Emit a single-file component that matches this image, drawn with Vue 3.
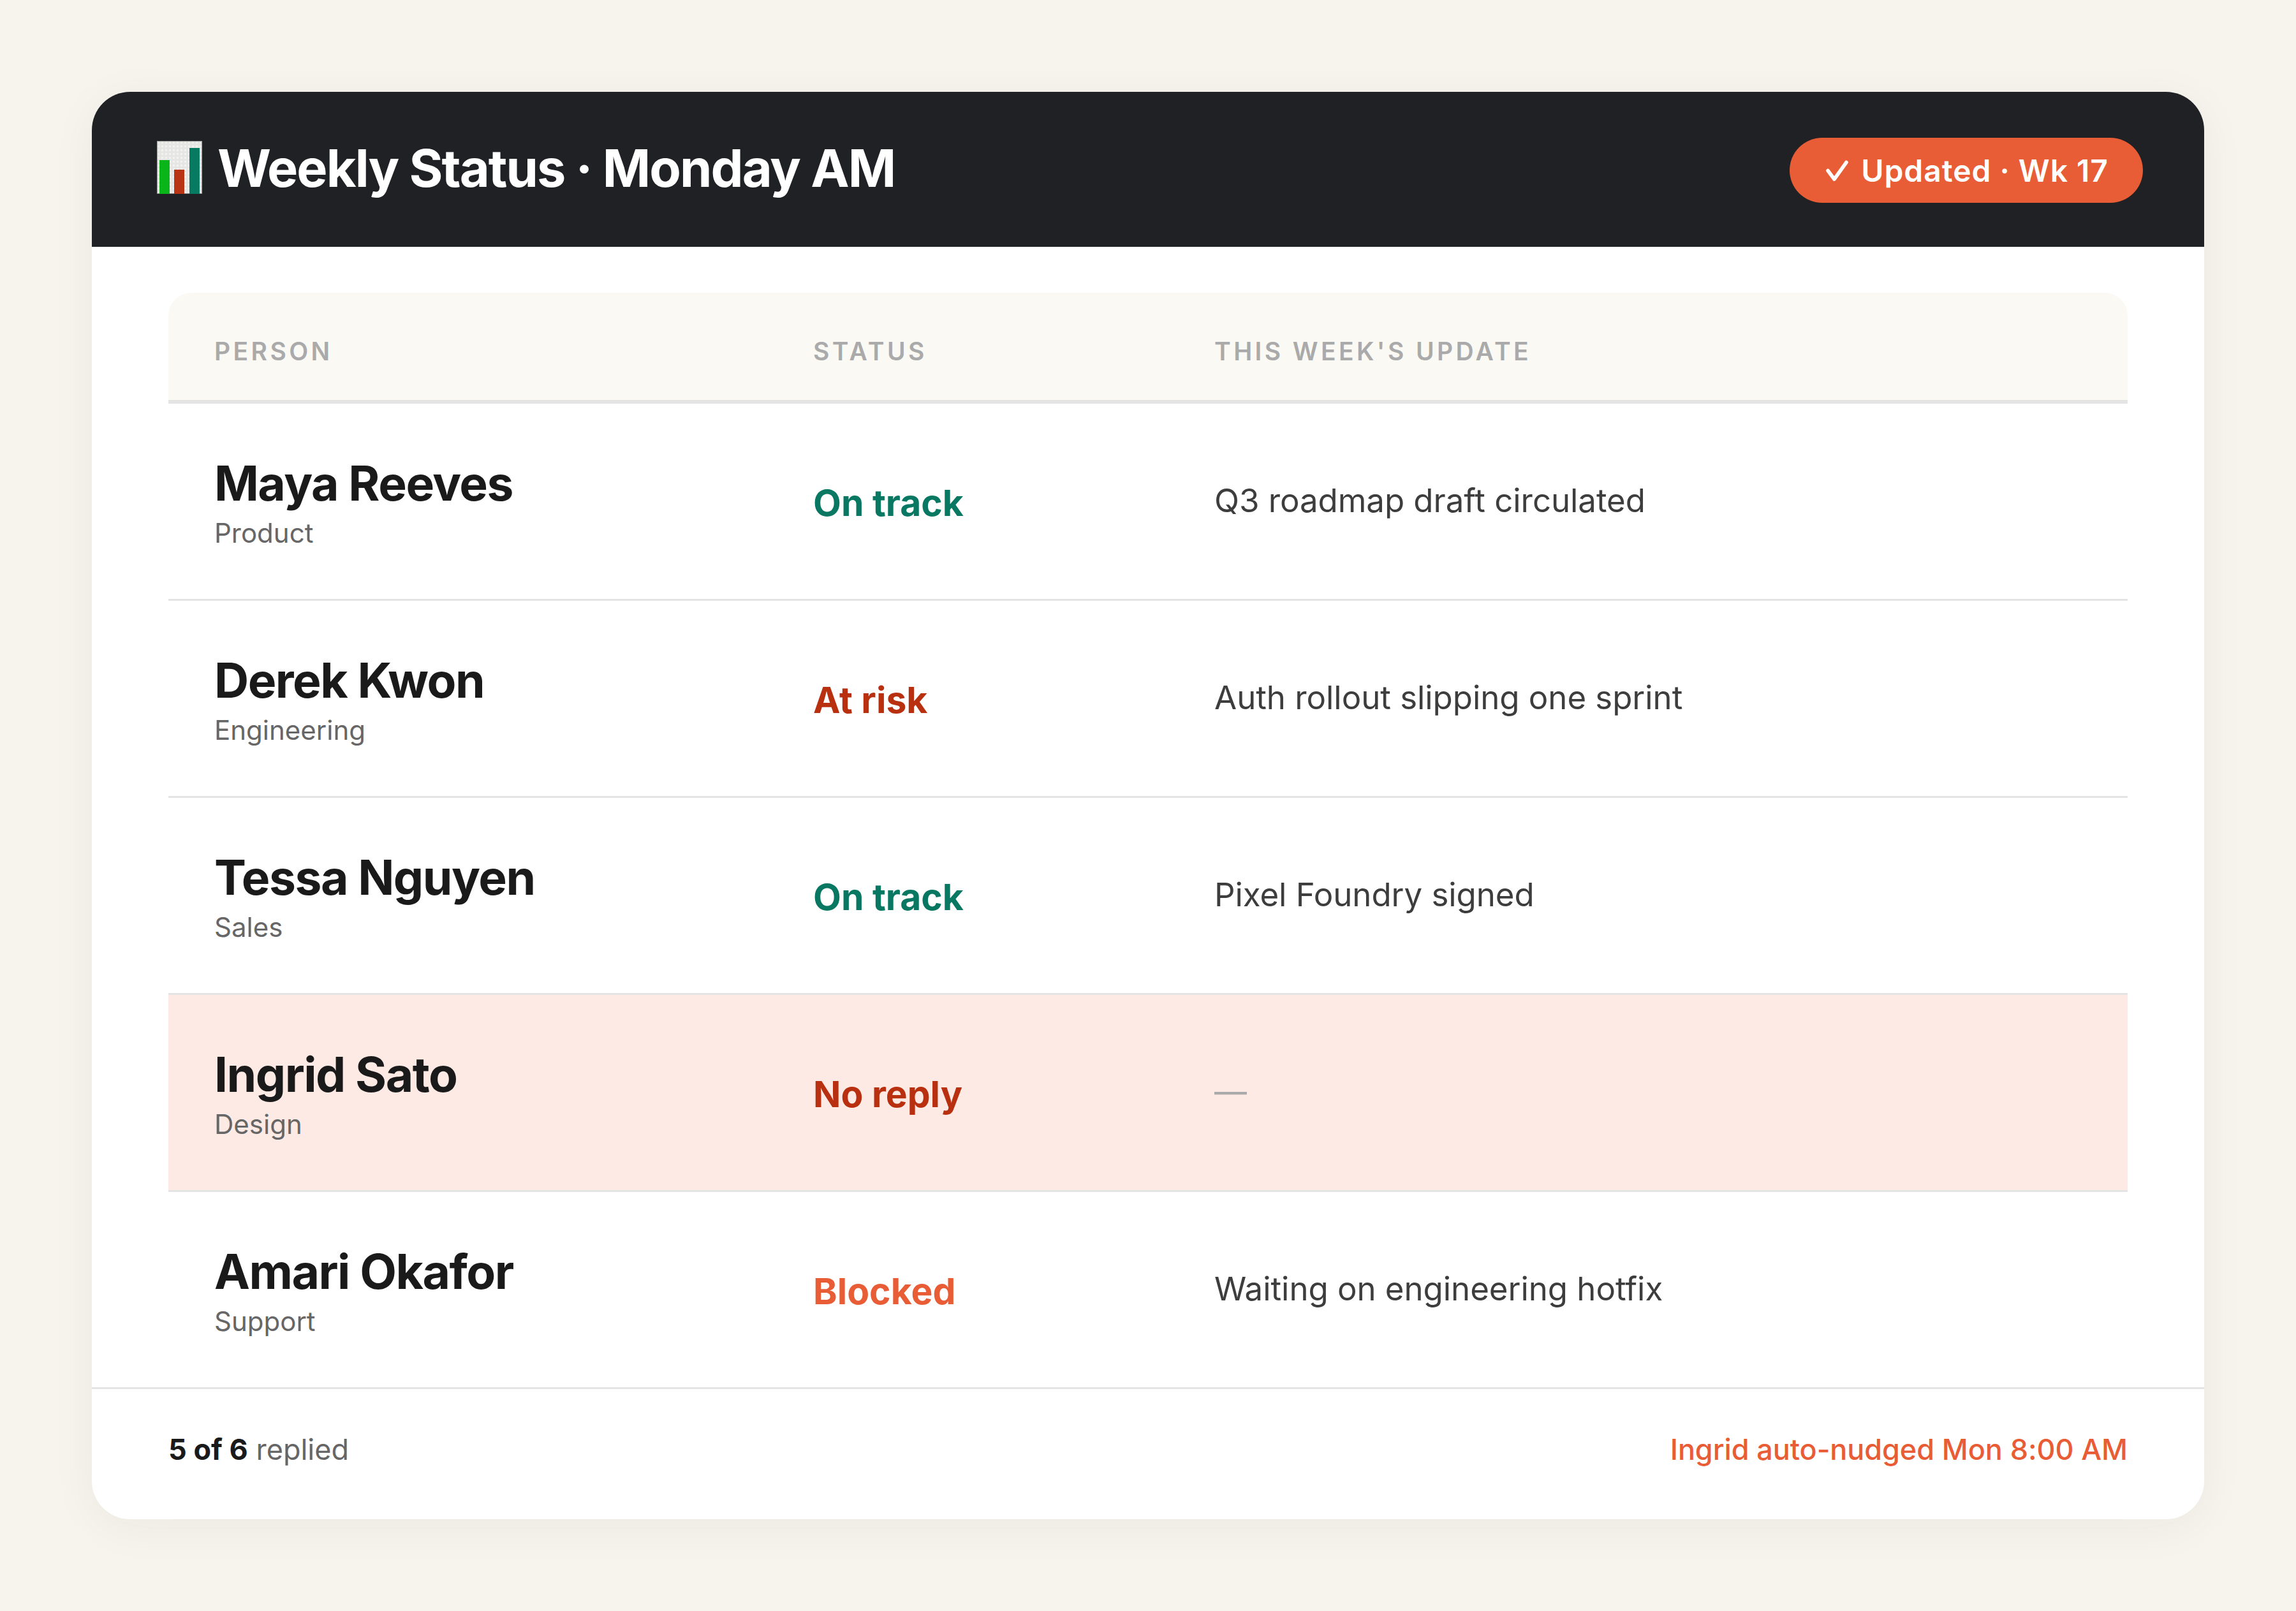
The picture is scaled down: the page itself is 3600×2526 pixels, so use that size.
<template>
  <div class="page">
    <section class="card">
      <header class="top">
        <h1 class="title">
          <svg class="chart" viewBox="0 0 71 83" width="71" height="83" aria-hidden="true">
            <defs>
              <pattern id="weave" width="6" height="6" patternUnits="userSpaceOnUse">
                <rect width="6" height="6" fill="#e6e6e4" />
                <rect x="1" y="1" width="3" height="3" fill="#f2f2f0" />
              </pattern>
            </defs>
            <rect width="71" height="83" fill="url(#weave)" />
            <path d="M.5 83V.5H70.500V83" fill="none" stroke="#a9a9a9" stroke-width="1.500" />
            <rect x="0" y="82" width="71" height="1" fill="#8c8c8c" />
            <rect x="4" y="30" width="16" height="53" fill="#0ab51a" />
            <rect x="27" y="45" width="16" height="38" fill="#b93414" />
            <rect x="51" y="11" width="16" height="72" fill="#077a62" />
          </svg>
          <span>Weekly Status · Monday AM</span>
        </h1>
        <div class="pill">
          <svg class="tick" viewBox="0 0 35 33" width="35" height="33" aria-hidden="true">
            <path d="M3 16.500 13 30 32 3.500" fill="none" stroke="#fff" stroke-width="5.600" stroke-linecap="round" stroke-linejoin="round" />
          </svg>
          <span>Updated · Wk 17</span>
        </div>
      </header>

      <div class="body">
        <div class="row head">
          <div>PERSON</div>
          <div>STATUS</div>
          <div>THIS WEEK'S UPDATE</div>
        </div>
        <div
          v-for="p in people"
          :key="p.name"
          class="row person"
          :class="{ flagged: p.flagged }"
        >
          <div class="who">
            <div class="name">{{ p.name }}</div>
            <div class="team">{{ p.team }}</div>
          </div>
          <div class="status" :class="p.tone">{{ p.status }}</div>
          <div class="update" :class="{ empty: p.flagged }">{{ p.update }}</div>
        </div>
      </div>

      <footer class="foot">
        <div class="count"><strong>5 of 6</strong> replied</div>
        <div class="nudge">Ingrid auto-nudged Mon 8:00 AM</div>
      </footer>
    </section>
  </div>
</template>

<script setup>
const people = [
  { name: 'Maya Reeves', team: 'Product', status: 'On track', tone: 'good', update: 'Q3 roadmap draft circulated' },
  { name: 'Derek Kwon', team: 'Engineering', status: 'At risk', tone: 'risk', update: 'Auth rollout slipping one sprint' },
  { name: 'Tessa Nguyen', team: 'Sales', status: 'On track', tone: 'good', update: 'Pixel Foundry signed' },
  { name: 'Ingrid Sato', team: 'Design', status: 'No reply', tone: 'risk', update: '—', flagged: true },
  { name: 'Amari Okafor', team: 'Support', status: 'Blocked', tone: 'blocked', update: 'Waiting on engineering hotfix' }
]
</script>

<style>
html, body { margin: 0; background: #f7f4ee; }
</style>

<style scoped>
.page {
  box-sizing: border-box;
  height: 2526px;
  padding: 144px;
  background: #f7f4ee;
  font-family: Inter, "Liberation Sans", sans-serif;
}
.card {
  height: 2238px;
  display: flex;
  flex-direction: column;
  background: #fff;
  border-radius: 60px;
  overflow: hidden;
  box-shadow: 0 12px 72px rgba(30, 25, 10, 0.05);
}
.top {
  flex: none;
  height: 243px;
  box-sizing: border-box;
  padding: 0 96px 0 102px;
  display: flex;
  align-items: center;
  justify-content: space-between;
  background: #1f2125;
  color: #fff;
}
.title {
  margin: -2px 0 0;
  display: flex;
  align-items: center;
  gap: 24px;
  font-size: 81px;
  font-weight: 700;
  letter-spacing: -1.96px;
  line-height: 1;
}
.chart { flex: none; margin-top: -5px; }
.pill {
  display: flex;
  align-items: center;
  gap: 20px;
  height: 102px;
  margin-top: 3px;
  padding: 0 54px 0 57px;
  border-radius: 51px;
  background: #e85d35;
  font-size: 48px;
  font-weight: 600;
  letter-spacing: 0.96px;
}
.tick { flex: none; }
.body {
  flex: 1;
  margin: 72px 120px 0;
}
.row {
  display: grid;
  grid-template-columns: 939px 629px 1fr;
  padding: 0 72px;
  align-items: center;
}
.head {
  height: 174px;
  box-sizing: border-box;
  padding-top: 14px;
  background: #faf9f4;
  border-radius: 36px 36px 0 0;
  border-bottom: 6px solid #e4e4e4;
  font-size: 39px;
  font-weight: 600;
  letter-spacing: 4.4px;
  color: #aaa;
}
.person {
  height: 309px;
  box-sizing: border-box;
  border-bottom: 3px solid #e4e4e4;
}
.person:last-child {
  height: 306px;
  border-bottom: 0;
}
.flagged { background: #fdeae5; }
.who { padding-top: 4px; }
.name {
  font-size: 75px;
  font-weight: 700;
  line-height: 1.2;
  letter-spacing: -1.5px;
  color: #1a1a1a;
}
.team {
  margin-top: 6px;
  font-size: 42px;
  line-height: 1.3;
  color: #666;
}
.status {
  padding-top: 4px;
  font-size: 57px;
  font-weight: 700;
}
.good { color: #087862; }
.risk { color: #b8300f; }
.blocked { color: #e85d35; }
.update {
  padding-bottom: 3px;
  font-size: 51px;
  letter-spacing: -0.06px;
  color: #3d3d3d;
}
.empty { color: #aaa; }
.foot {
  flex: none;
  height: 207px;
  box-sizing: border-box;
  padding: 0 120px 16px;
  display: flex;
  align-items: center;
  justify-content: space-between;
  border-top: 3px solid #e4e4e4;
  font-size: 45px;
}
.count { color: #666; }
.count strong { color: #1a1a1a; font-weight: 700; }
.nudge { color: #e85d35; font-weight: 500; letter-spacing: -0.1px; }
</style>
